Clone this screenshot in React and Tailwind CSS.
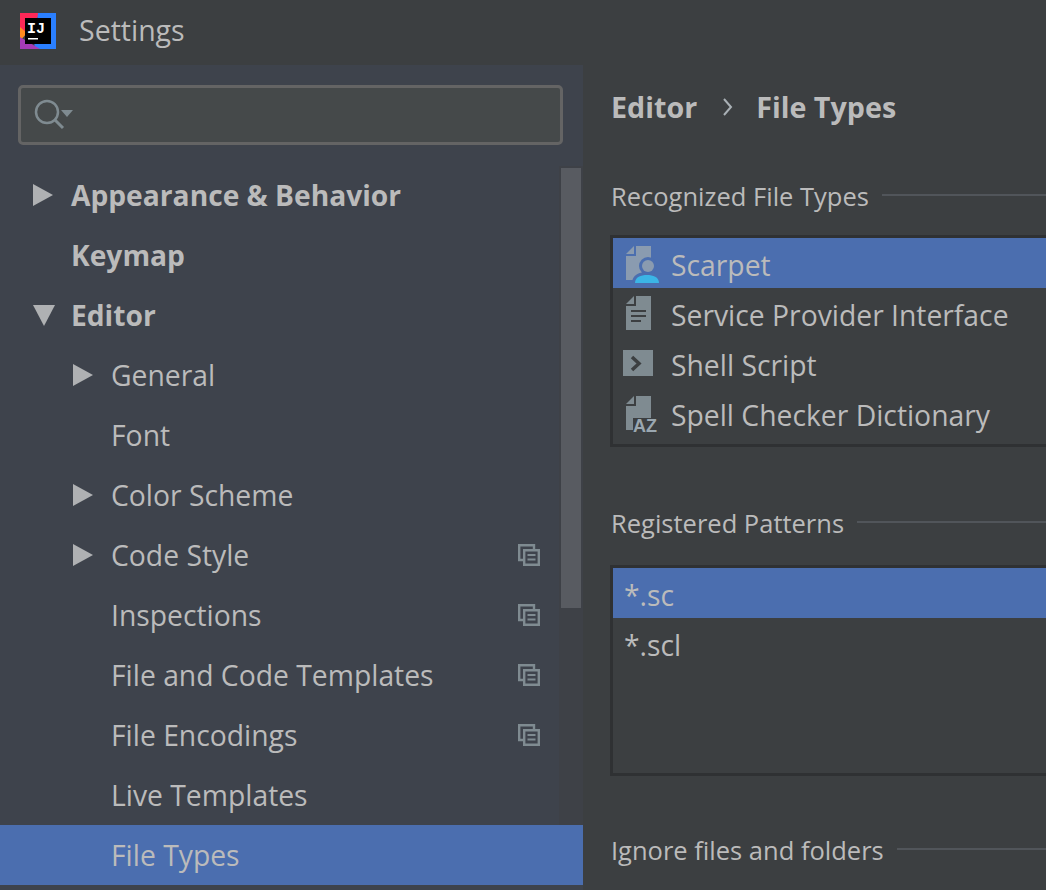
import React from 'react';

const FONT = 'font-["Open_Sans",sans-serif]';

function Caret({ down }) {
  return (
    <svg width="22" height="22" viewBox="0 0 22 22" className="shrink-0">
      {down ? <path d="M0 1h22L11 22z" fill="#afb1b3" /> : <path d="M0 0l20 11L0 22z" fill="#afb1b3" />}
    </svg>
  );
}

function ProjectIcon() {
  return (
    <svg width="23" height="23" viewBox="0 0 23 23" className="shrink-0" fill="none" stroke="#7f8b91" strokeWidth="2.4">
      <path d="M6.500 16H2.200V1.200H17V5" />
      <path d="M7.200 6.200h14.600v14.600H7.200z" />
      <path d="M10.500 11h8M10.500 15.500h8" strokeWidth="2" />
    </svg>
  );
}

const rows = [
  { label: 'Appearance & Behavior', bold: true, caret: 'right', level: 0 },
  { label: 'Keymap', bold: true, level: 0 },
  { label: 'Editor', bold: true, caret: 'down', level: 0 },
  { label: 'General', caret: 'right', level: 1 },
  { label: 'Font', level: 1 },
  { label: 'Color Scheme', caret: 'right', level: 1 },
  { label: 'Code Style', caret: 'right', level: 1, project: true },
  { label: 'Inspections', level: 1, project: true },
  { label: 'File and Code Templates', level: 1, project: true },
  { label: 'File Encodings', level: 1, project: true },
  { label: 'Live Templates', level: 1 },
  { label: 'File Types', level: 1, selected: true },
];

function TreeRow({ row }) {
  return (
    <div className={`flex h-[60px] items-center pr-[43px] ${row.selected ? 'bg-[#4b6eaf]' : ''}`}>
      <div className={`flex items-center shrink-0 ${row.level === 0 ? 'w-[71px] pl-[33px]' : 'w-[111px] pl-[73px]'}`}>
        {row.caret && <Caret down={row.caret === 'down'} />}
      </div>
      <span className={`leading-[60px] whitespace-nowrap text-[#bbbbbb] ${row.bold ? 'font-bold text-[28.200px]' : 'text-[28.300px]'}`}>
        {row.label}
      </span>
      <div className="flex-1" />
      {row.project && <ProjectIcon />}
    </div>
  );
}

function SectionTitle({ children }) {
  return (
    <div className="flex items-center gap-[13px] h-[60px]">
      <span className="text-[25.500px] whitespace-nowrap text-[#bbbbbb]">{children}</span>
      <div className="flex-1 h-[2px] mb-[3px] bg-[#51555a]" />
    </div>
  );
}

function FileRow({ label, selected, icon }) {
  return (
    <div className={`flex h-[50px] items-center ${selected ? 'bg-[#4b6eaf]' : ''}`}>
      <div className="w-[58px] flex justify-center shrink-0">{icon}</div>
      <span className="pt-[5px] text-[28.300px] leading-[45px] whitespace-nowrap text-[#bbbbbb]">{label}</span>
    </div>
  );
}

const fileIcons = {
  scarpet: (
    <svg width="34" height="40" viewBox="0 0 34 40">
      <path d="M11 3H26V37H1V13H11z" fill="#8a9bb0" />
      <path d="M9 3V11H1z" fill="#8a9bb0" />
      <circle cx="23" cy="23" r="9" fill="#4b6eaf" />
      <path d="M7 40c0-8 7-11 16-11s11 3 11 11z" fill="#4b6eaf" />
      <circle cx="23" cy="23" r="6" fill="#8a9bb0" />
      <path d="M10 40c0-6 6-8 12-8s12 2 12 8z" fill="#3bb5e6" />
    </svg>
  ),
  spi: (
    <svg width="34" height="40" viewBox="0 0 34 40">
      <path d="M11 3H26V37H1V13H11z" fill="#7f8b91" />
      <path d="M9 3V11H1z" fill="#7f8b91" />
      <path d="M6 17h15v2H6zM6 22h15v2H6zM6 27h10v2H6z" fill="#3c3f41" />
    </svg>
  ),
  shell: (
    <svg width="38" height="40" viewBox="0 0 38 40">
      <path d="M0 7h30v26H0z" fill="#7f8b91" />
      <path d="M9 14l7 6.500-7 6.500" fill="none" stroke="#3c3f41" strokeWidth="3.500" />
    </svg>
  ),
  dict: (
    <svg width="34" height="48" viewBox="0 -4 34 48">
      <path d="M11 3H26V25H8V37H1V13H11z" fill="#7f8b91" />
      <path d="M9 3V11H1z" fill="#7f8b91" />
      <text x="8" y="39" fontSize="18" fontWeight="700" fontFamily="Liberation Sans" fill="#9aa7b0">AZ</text>
    </svg>
  ),
};

export default function App() {
  return (
    <div className={`h-[890px] w-[1046px] overflow-hidden bg-[#3c3f41] ${FONT}`}>
      {/* Title bar */}
      <div className="flex h-[65px] items-center pl-[20px] pb-[4px]">
        <svg width="36" height="36" viewBox="0 0 36 36" className="shrink-0">
          <path d="M0 0h20L9 20 0 24z" fill="#fe2857" />
          <path d="M0 14l7 6-7 8z" fill="#ff8a1f" />
          <path d="M18 0h18v36H14z" fill="#2a7fff" />
          <path d="M0 36V24L20 36z" fill="#a53bb5" />
          <path d="M5 5h26v26H5z" fill="#000" />
          <text x="7" y="20" fontSize="15" fontWeight="700" fontFamily="Liberation Mono" fill="#fff">IJ</text>
          <path d="M8 25h10v1.500H8z" fill="#fff" />
        </svg>
        <span className="ml-[23px] text-[28.500px] text-[#bbbbbb]">Settings</span>
      </div>

      <div className="flex h-[825px]">
        {/* Sidebar */}
        <div className="w-[583px] shrink-0 bg-[#3e434c] relative overflow-hidden">
          <div className="h-[100px] pt-[20px] pl-[18px] pr-[20px]">
            <div className="flex h-[60px] items-center rounded-[5px] border-[3px] border-[#646464] bg-[#45494a] pl-[12px]">
              <svg width="42" height="32" viewBox="0 0 42 32">
                <circle cx="14" cy="13" r="11" fill="none" stroke="#7f8b91" strokeWidth="2.500" />
                <path d="M22 21l8 8" stroke="#7f8b91" strokeWidth="3" />
                <path d="M28 11h12l-6 7z" fill="#7f8b91" />
              </svg>
            </div>
          </div>
          <div>
            {rows.map((row) => (
              <TreeRow key={row.label} row={row} />
            ))}
          </div>
          {/* scrollbar */}
          <div className="absolute left-[559px] top-[101px] h-[659px] w-[24px] bg-[#3e4147]">
            <div className="ml-[2px] mt-[2px] h-[440px] w-[20px] bg-[#585b61]" />
          </div>
        </div>

        {/* Content */}
        <div className="flex-1 min-w-0 pl-[28px]">
          <div className="flex h-[86px] pb-[2px] items-center text-[28.700px] font-bold text-[#bbbbbb]">
            <span>Editor</span>
            <svg width="12" height="18" viewBox="0 0 12 18" className="ml-[25px] mr-[22px]">
              <path d="M2 1l7 8-7 8" fill="none" stroke="#a9b0b5" strokeWidth="2" />
            </svg>
            <span>File Types</span>
          </div>

          <div className="mt-[15px]">
            <SectionTitle>Recognized File Types</SectionTitle>
          </div>
          <div className="mt-[9px] -ml-px h-[212px] border-[3px] border-r-0 border-[#2f3133]">
            <FileRow label="Scarpet" selected icon={fileIcons.scarpet} />
            <FileRow label="Service Provider Interface" icon={fileIcons.spi} />
            <FileRow label="Shell Script" icon={fileIcons.shell} />
            <FileRow label="Spell Checker Dictionary" icon={fileIcons.dict} />
          </div>

          <div className="mt-[46px]">
            <SectionTitle>Registered Patterns</SectionTitle>
          </div>
          <div className="mt-[12px] -ml-px h-[211px] border-[3px] border-r-0 border-[#2f3133]">
            <div className="flex h-[50px] items-center bg-[#4b6eaf] pl-[11px] pt-[5px] text-[28.300px] text-[#bbbbbb]">*.sc</div>
            <div className="flex h-[50px] items-center pl-[11px] pt-[5px] text-[28.300px] text-[#bbbbbb]">*.scl</div>
          </div>

          <div className="mt-[44px]">
            <SectionTitle>Ignore files and folders</SectionTitle>
          </div>
        </div>
      </div>
    </div>
  );
}
